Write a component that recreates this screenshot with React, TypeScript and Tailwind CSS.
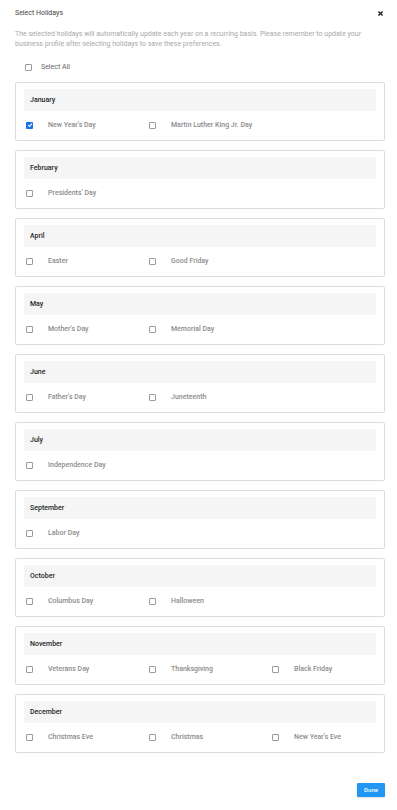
import React from "react";

type Item = { label: string; checked?: boolean };
const months: { name: string; items: Item[] }[] = [
  { name: "January", items: [{ label: "New Year's Day", checked: true }, { label: "Martin Luther King Jr. Day" }] },
  { name: "February", items: [{ label: "Presidents' Day" }] },
  { name: "April", items: [{ label: "Easter" }, { label: "Good Friday" }] },
  { name: "May", items: [{ label: "Mother's Day" }, { label: "Memorial Day" }] },
  { name: "June", items: [{ label: "Father's Day" }, { label: "Juneteenth" }] },
  { name: "July", items: [{ label: "Independence Day" }] },
  { name: "September", items: [{ label: "Labor Day" }] },
  { name: "October", items: [{ label: "Columbus Day" }, { label: "Halloween" }] },
  { name: "November", items: [{ label: "Veterans Day" }, { label: "Thanksgiving" }, { label: "Black Friday" }] },
  { name: "December", items: [{ label: "Christmas Eve" }, { label: "Christmas" }, { label: "New Year's Eve" }] },
];

function Box({ checked }: { checked?: boolean }) {
  if (checked) {
    return (
      <span className="flex h-[7px] w-[7px] shrink-0 items-center justify-center rounded-[1px] bg-[#1a73e8]">
        <svg width="6" height="6" viewBox="0 0 10 10">
          <path d="M2 5.2 L4.2 7.4 L8.2 2.8" stroke="white" strokeWidth="1.8" fill="none" />
        </svg>
      </span>
    );
  }
  return <span className="block h-[7px] w-[7px] shrink-0 rounded-[1px] border border-[#9a9a9a] bg-white" />;
}

export default function App() {
  return (
    <div className="min-h-[810px] w-[397px] bg-white pl-[15px] pr-[12px] text-[7px] leading-[10px]" style={{ fontFamily: "Roboto, 'Liberation Sans', sans-serif" }}>
      <div className="flex items-center justify-between pt-[8px]">
        <span className="font-normal text-[#444]">Select Holidays</span>
        <svg width="7" height="7" viewBox="0 0 10 10" className="mr-[1px]">
          <path d="M2 2 L8 8 M8 2 L2 8" stroke="#222" strokeWidth="2" />
        </svg>
      </div>
      <p className="mt-[11px] pr-[12px] text-[#a8a8a8]">
        The selected holidays will automatically update each year on a recurring basis. Please remember to update your business profile after selecting holidays to save these preferences.
      </p>
      <div className="mt-[14px] flex h-[8px] items-center pl-[10px]">
        <Box />
        <span className="ml-[9px] font-normal text-[#666]">Select All</span>
      </div>
      <div className="mt-[11px] flex flex-col gap-[9px]">
        {months.map((m) => (
          <div key={m.name} className="rounded-[2px] border border-[#dcdcdc] px-[8px] pb-[12px] pt-[6px]">
            <div className="flex h-[22px] items-center bg-[#f5f5f5] pl-[6px] font-medium text-[#1f1f1f]">{m.name}</div>
            <div className="mt-[9px] grid h-[8px] grid-cols-[123px_123px_123px] items-center pl-[2px]">
              {m.items.map((it) => (
                <div key={it.label} className="flex items-center">
                  <Box checked={it.checked} />
                  <span className="ml-[15px] font-medium text-[#8c8c8c]">{it.label}</span>
                </div>
              ))}
            </div>
          </div>
        ))}
      </div>
      <div className="mt-[30px] flex justify-end">
        <button className="h-[14px] w-[28px] rounded-[1px] bg-[#2196f3] text-[6px] font-medium text-white shadow-sm">Done</button>
      </div>
    </div>
  );
}
